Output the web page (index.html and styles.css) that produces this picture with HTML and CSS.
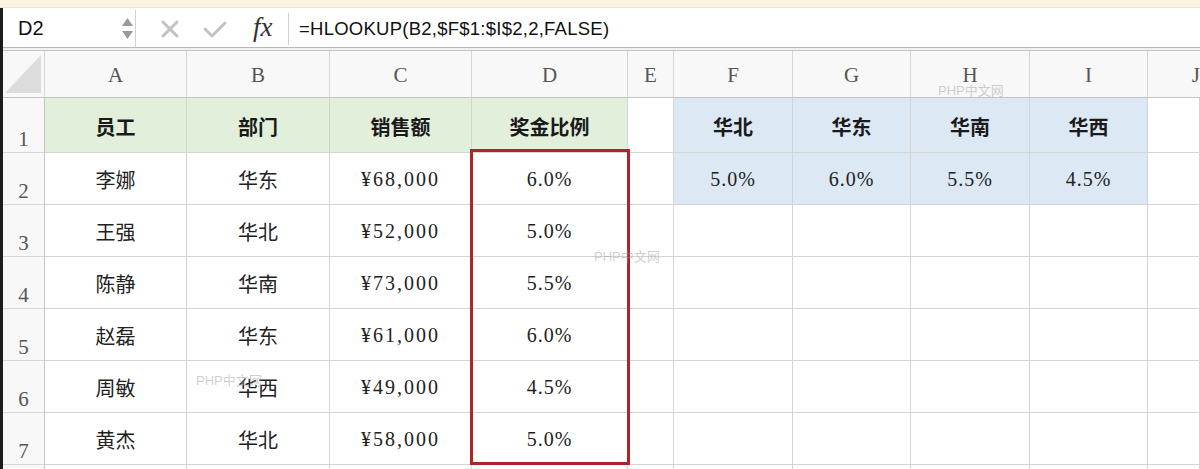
FILE: index.html
```html
<!DOCTYPE html>
<html lang="zh-CN">
<head>
    <meta charset="UTF-8">
    <title>HLOOKUP</title>
    <link rel="stylesheet" href="styles.css">
</head>
<body>

    <!-- Top strip -->
    <div class="top-strip"></div>

    <div class="window">
        <!-- Formula bar -->
        <div class="formula-bar">
            <div class="name-box">
                <span>D2</span>
                <div class="spinner">
                    <svg width="11" height="8" viewBox="0 0 11 8"><path d="M5.5 0 L11 8 L0 8 Z" fill="#9a9a9a"/></svg>
                    <svg width="11" height="8" viewBox="0 0 11 8"><path d="M0 0 L11 0 L5.5 8 Z" fill="#9a9a9a"/></svg>
                </div>
            </div>
            <div class="bar-icons">
                <svg class="icon" width="20" height="20" viewBox="0 0 20 20"><path d="M3 3 L17 17 M17 3 L3 17" stroke="#c2c2c2" stroke-width="3" stroke-linecap="round"/></svg>
                <svg class="icon" width="24" height="20" viewBox="0 0 24 20"><path d="M2 10 L9 17 L22 4" stroke="#c2c2c2" stroke-width="3" fill="none" stroke-linecap="round" stroke-linejoin="round"/></svg>
                <span class="fx">fx</span>
            </div>
            <div class="formula">=HLOOKUP(B2,$F$1:$I$2,2,FALSE)</div>
        </div>

        <!-- Sheet -->
        <div class="sheet">
            <div class="grid">
                <div class="col-head corner">
                    <svg width="36" height="38" viewBox="0 0 36 38"><path d="M36 0 L36 38 L0 38 Z" fill="#dcdcdc"/></svg>
                </div>
                <div class="col-head">A</div>
                <div class="col-head">B</div>
                <div class="col-head">C</div>
                <div class="col-head">D</div>
                <div class="col-head">E</div>
                <div class="col-head">F</div>
                <div class="col-head">G</div>
                <div class="col-head">H</div>
                <div class="col-head">I</div>
                <div class="col-head last">J</div>

                <div class="row-head">1</div>
                <div class="cell th green">员工</div>
                <div class="cell th green">部门</div>
                <div class="cell th green">销售额</div>
                <div class="cell th green">奖金比例</div>
                <div class="cell"></div>
                <div class="cell th blue">华北</div>
                <div class="cell th blue">华东</div>
                <div class="cell th blue">华南</div>
                <div class="cell th blue">华西</div>
                <div class="cell"></div>

                <div class="row-head">2</div>
                <div class="cell">李娜</div>
                <div class="cell">华东</div>
                <div class="cell num money">¥68,000</div>
                <div class="cell num">6.0%</div>
                <div class="cell"></div>
                <div class="cell num blue">5.0%</div>
                <div class="cell num blue">6.0%</div>
                <div class="cell num blue">5.5%</div>
                <div class="cell num blue">4.5%</div>
                <div class="cell"></div>

                <div class="row-head">3</div>
                <div class="cell">王强</div>
                <div class="cell">华北</div>
                <div class="cell num money">¥52,000</div>
                <div class="cell num">5.0%</div>
                <div class="cell"></div><div class="cell"></div><div class="cell"></div><div class="cell"></div><div class="cell"></div><div class="cell"></div>

                <div class="row-head">4</div>
                <div class="cell">陈静</div>
                <div class="cell">华南</div>
                <div class="cell num money">¥73,000</div>
                <div class="cell num">5.5%</div>
                <div class="cell"></div><div class="cell"></div><div class="cell"></div><div class="cell"></div><div class="cell"></div><div class="cell"></div>

                <div class="row-head">5</div>
                <div class="cell">赵磊</div>
                <div class="cell">华东</div>
                <div class="cell num money">¥61,000</div>
                <div class="cell num">6.0%</div>
                <div class="cell"></div><div class="cell"></div><div class="cell"></div><div class="cell"></div><div class="cell"></div><div class="cell"></div>

                <div class="row-head">6</div>
                <div class="cell">周敏</div>
                <div class="cell">华西</div>
                <div class="cell num money">¥49,000</div>
                <div class="cell num">4.5%</div>
                <div class="cell"></div><div class="cell"></div><div class="cell"></div><div class="cell"></div><div class="cell"></div><div class="cell"></div>

                <div class="row-head">7</div>
                <div class="cell">黄杰</div>
                <div class="cell">华北</div>
                <div class="cell num money">¥58,000</div>
                <div class="cell num">5.0%</div>
                <div class="cell"></div><div class="cell"></div><div class="cell"></div><div class="cell"></div><div class="cell"></div><div class="cell"></div>

                <div class="row-head"></div>
                <div class="cell"></div><div class="cell"></div><div class="cell"></div><div class="cell"></div><div class="cell"></div>
                <div class="cell"></div><div class="cell"></div><div class="cell"></div><div class="cell"></div><div class="cell"></div>
            </div>

            <!-- Selection box around D2:D7 -->
            <div class="highlight"></div>

            <!-- Watermarks -->
            <span class="watermark wm-1">PHP中文网</span>
            <span class="watermark wm-2">PHP中文网</span>
            <span class="watermark wm-3">PHP中文网</span>
        </div>
    </div>

</body>
</html>
```

FILE: styles.css
```css
/* General reset */
* {
    margin: 0;
    padding: 0;
    box-sizing: border-box;
}

body {
    width: 1200px;
    height: 469px;
    overflow: hidden;
    background-color: #ffffff;
    font-family: "Liberation Sans", Arial, sans-serif;
    color: #222;
}

/* Yellow strip at the top */
.top-strip {
    height: 8px;
    background-color: #fcf4e1;
    border-bottom: 1px solid #ebe3cf;
}

.window {
    border-left: 3px solid #1c1c1c;
}

/* Formula bar */
.formula-bar {
    display: flex;
    align-items: stretch;
    height: 40px;
    padding-top: 2px;
    background-color: #fff;
    border-bottom: 1px solid #b9b9b9;
}

.name-box {
    display: flex;
    align-items: center;
    justify-content: space-between;
    width: 133px;
    padding: 0 2px 0 15px;
    border-right: 1px solid #d2d2d2;
    font-size: 20px;
    color: #111;
}

.spinner {
    display: flex;
    flex-direction: column;
    gap: 5px;
}

.bar-icons {
    display: flex;
    align-items: center;
    width: 152px;
    padding-left: 24px;
    gap: 23px;
}

.fx {
    font-family: "Liberation Serif", "DejaVu Serif", serif;
    font-style: italic;
    font-size: 27px;
    color: #333;
    margin-left: 3px;
    margin-top: -3px;
}

.formula {
    flex: 1;
    display: flex;
    align-items: center;
    margin: 3px 0 2px;
    padding-left: 10px;
    border-left: 1px solid #cfcfcf;
    font-size: 18.5px;
    letter-spacing: 0.25px;
    color: #111;
}

/* Sheet */
.sheet {
    position: relative;
    border-top: 2px solid #efefef;
}

.grid {
    display: grid;
    grid-template-columns: 42px 142px 143px 142px 156px 46px 119px 118px 119px 118px 52px;
    grid-template-rows: 47px 55px repeat(6, 52px) 20px;
    border-top: 1px solid #c6c6c6;
}

.col-head {
    display: flex;
    align-items: center;
    justify-content: center;
    padding-top: 3px;
    background-color: #f8f8f8;
    border-right: 1px solid #d6d6d6;
    border-bottom: 1px solid #c4c4c4;
    font-family: "Liberation Serif", "DejaVu Serif", serif;
    font-size: 21px;
    color: #555;
}

.col-head.last {
    justify-content: flex-end;
    border-right: none;
}

.corner {
    align-items: flex-end;
    justify-content: flex-end;
    padding: 0 3px 4px 0;
}

.row-head {
    display: flex;
    align-items: flex-end;
    justify-content: center;
    padding-bottom: 0;
    background-color: #f8f8f8;
    border-right: 1px solid #c4c4c4;
    border-bottom: 1px solid #d6d6d6;
    font-family: "Liberation Serif", "DejaVu Serif", serif;
    font-size: 21px;
    color: #555;
}

.cell {
    display: flex;
    align-items: center;
    justify-content: center;
    padding-top: 2px;
    border-right: 1px solid #d4d4d4;
    border-bottom: 1px solid #d4d4d4;
    font-family: "Noto Sans CJK SC", sans-serif;
    font-size: 20px;
    color: #222;
}

.cell.th {
    font-weight: 700;
    color: #1a1a1a;
}

.cell.num {
    font-family: "Liberation Serif", "DejaVu Serif", serif;
    font-size: 20px;
    letter-spacing: 1px;
}

.cell.money {
    letter-spacing: 2px;
}

.green {
    background-color: #e2efda;
}

.blue {
    background-color: #dde8f5;
}

/* Red selection box */
.highlight {
    position: absolute;
    left: 467px;
    top: 99px;
    width: 160px;
    height: 316px;
    border: 3px solid #b0232a;
}

/* Watermarks */
.watermark {
    position: absolute;
    font-family: "Liberation Sans", "Noto Sans CJK SC", sans-serif;
    font-size: 13px;
    color: rgba(160, 160, 160, 0.5);
}

.wm-1 { left: 935px; top: 30px; }
.wm-2 { left: 591px; top: 196px; }
.wm-3 { left: 193px; top: 320px; }
```
